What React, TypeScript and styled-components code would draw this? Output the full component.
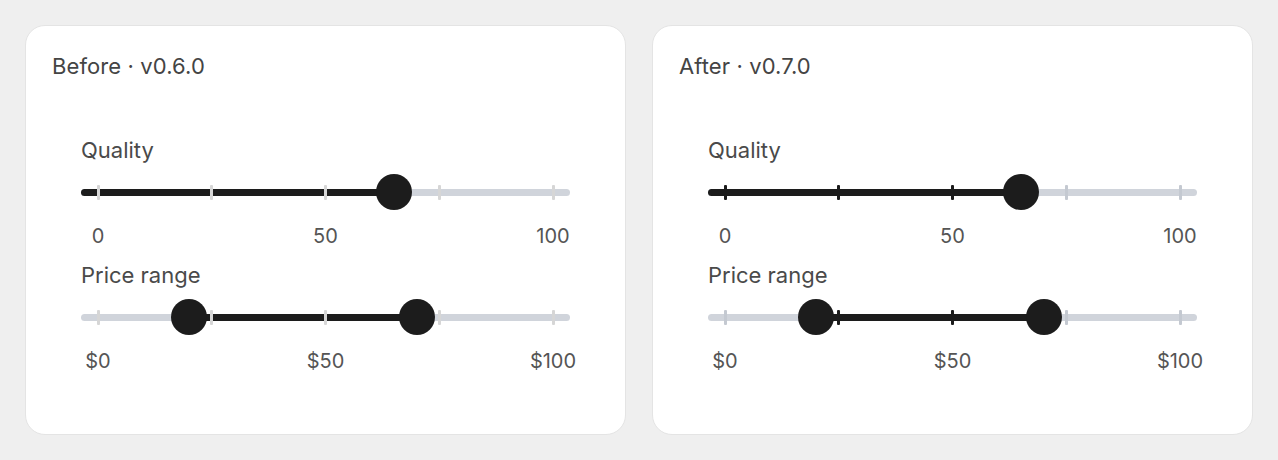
import React from 'react';
import styled, { createGlobalStyle } from 'styled-components';

const GlobalStyle = createGlobalStyle`
  html, body { margin: 0; padding: 0; background: #efefef; }
  body { font-family: Inter, "Noto Sans", sans-serif; color: #444; }
`;

const colors = {
  ink: '#1c1c1c',
  rail: '#d0d4db',
  tickLight: '#d6d6d6',
  tickIdle: '#c4c9d1',
};

const Page = styled.div`
  display: grid;
  grid-template-columns: 1fr 1fr;
  gap: 26px;
  padding: 25px;
  height: 460px;
  box-sizing: border-box;
`;

const Card = styled.section`
  display: flex;
  flex-direction: column;
  background: #fff;
  border: 1px solid #e4e4e4;
  border-radius: 20px;
  padding: 25px 26px;
  box-sizing: border-box;
  height: 410px;
`;

const Title = styled.h2`
  margin: 0 0 55px;
  font-size: 22px;
  font-weight: 400;
  line-height: 30px;
  color: #444;
  letter-spacing: 0.1px;
`;

const Group = styled.div`
  display: flex;
  flex-direction: column;
  margin: 0 29px;
  & + & { margin-top: 13px; }
`;

const Label = styled.div`
  font-size: 22px;
  font-weight: 400;
  line-height: 28px;
  color: #4a4a4a;
  margin-bottom: 10px;
`;

const Rail = styled.div`
  height: 36px;
  display: flex;
  align-items: center;
`;

// the track overhangs the 0..100 scale by 17px on each side
const Track = styled.div`
  position: relative;
  flex: 1;
  height: 7px;
  padding: 0 17px;
  border-radius: 4px;
  background: ${colors.rail};
`;

const Scale = styled.div`
  position: relative;
  height: 100%;
`;

const Fill = styled.div<{ $lead?: boolean }>`
  position: absolute;
  top: 0;
  bottom: 0;
  background: ${colors.ink};
  border-radius: ${p => (p.$lead ? '4px 0 0 4px' : '0')};
`;

const Tick = styled.div<{ $color: string }>`
  position: absolute;
  top: -4px;
  width: 3px;
  height: 15px;
  border-radius: 1px;
  margin-left: -1.5px;
  background: ${p => p.$color};
`;

const Thumb = styled.div`
  position: absolute;
  top: 50%;
  width: 36px;
  height: 36px;
  margin: -18px 0 0 -18px;
  border-radius: 50%;
  background: ${colors.ink};
`;

const Marks = styled.div`
  display: flex;
  justify-content: space-between;
  padding: 0 17px;
  margin-top: 14px;
`;

const Mark = styled.span`
  width: 0;
  display: flex;
  justify-content: center;
  white-space: nowrap;
  font-size: 20px;
  line-height: 24px;
  color: #555;
`;

type SliderProps = {
  label: string;
  values: number[];
  marks: string[];
  darkTicks: boolean;
};

const ticks = [0, 25, 50, 75, 100];

const Slider = ({ label, values, marks, darkTicks }: SliderProps) => {
  const range = values.length > 1;
  const lo = range ? values[0] : 0;
  const hi = range ? values[1] : values[0];

  const tickColor = (v: number) => {
    if (!darkTicks) return colors.tickLight;
    return v >= lo && v <= hi ? colors.ink : colors.tickIdle;
  };

  return (
    <Group>
      <Label>{label}</Label>
      <Rail>
        <Track>
          <Scale>
            {range ? (
              <Fill style={{ left: `${lo}%`, width: `${hi - lo}%` }} />
            ) : (
              <Fill $lead style={{ left: -17, width: `calc(${hi}% + 17px)` }} />
            )}
            {ticks.map(t => (
              <Tick key={t} $color={tickColor(t)} style={{ left: `${t}%` }} />
            ))}
            {values.map((v, i) => (
              <Thumb key={i} style={{ left: `${v}%` }} />
            ))}
          </Scale>
        </Track>
      </Rail>
      <Marks>
        {marks.map(m => (
          <Mark key={m}>{m}</Mark>
        ))}
      </Marks>
    </Group>
  );
};

const Panel = ({ title, darkTicks }: { title: string; darkTicks: boolean }) => (
  <Card>
    <Title>{title}</Title>
    <Slider label="Quality" values={[65]} marks={['0', '50', '100']} darkTicks={darkTicks} />
    <Slider label="Price range" values={[20, 70]} marks={['$0', '$50', '$100']} darkTicks={darkTicks} />
  </Card>
);

export default function App() {
  return (
    <>
      <GlobalStyle />
      <Page>
        <Panel title="Before · v0.6.0" darkTicks={false} />
        <Panel title="After · v0.7.0" darkTicks />
      </Page>
    </>
  );
}
